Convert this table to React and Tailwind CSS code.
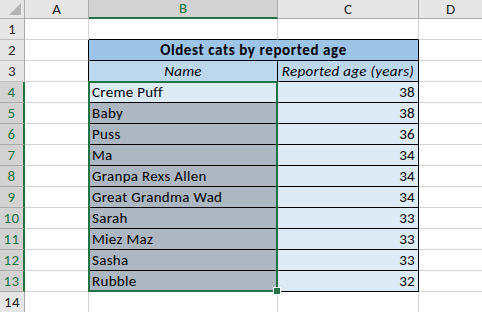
import React from "react";

const cats = [
  ["Creme Puff", 38],
  ["Baby", 38],
  ["Puss", 36],
  ["Ma", 34],
  ["Granpa Rexs Allen", 34],
  ["Great Grandma Wad", 34],
  ["Sarah", 33],
  ["Miez Maz", 33],
  ["Sasha", 33],
  ["Rubble", 32],
];

const font = { fontFamily: "Calibri, Carlito, Lato, 'Open Sans', sans-serif" };

function RowHead({ n, selected }) {
  return (
    <div
      className={
        "flex items-center justify-center border-b text-[15px] tracking-[0.3px] " +
        (selected
          ? "bg-[#d2d2d2] text-[#217346] border-b-[#ababab] border-r-2 border-r-[#217346]"
          : "bg-[#e6e6e6] text-[#262626] border-b-[#c0c0c0] border-r border-r-[#ababab]")
      }
    >
      {n}
    </div>
  );
}

export default function App() {
  return (
    <div className="relative w-[482px] h-[312px] overflow-hidden bg-white text-black" style={font}>
      <div className="grid grid-cols-[25px_64px_189px_141px_1fr] grid-rows-[19px_repeat(14,21px)]">
        {/* column headers */}
        <div className="relative bg-[#e6e6e6] border-r border-b border-[#ababab]">
          <svg className="absolute right-[3px] bottom-[3px]" width="12" height="12" viewBox="0 0 12 12">
            <polygon points="12,0 12,12 0,12" fill="#b4b4b4" />
          </svg>
        </div>
        <div className="flex items-center justify-center bg-[#e6e6e6] border-r border-b border-[#ababab] text-[15px] text-[#262626]">A</div>
        <div className="flex items-center justify-center bg-[#d2d2d2] border-r border-r-[#ababab] border-b-2 border-b-[#217346] text-[15px] text-[#217346]">B</div>
        <div className="flex items-center justify-center bg-[#e6e6e6] border-r border-b border-[#ababab] text-[15px] text-[#262626]">C</div>
        <div className="flex items-center justify-center bg-[#e6e6e6] border-b border-[#ababab] text-[15px] text-[#262626]">D</div>

        {/* row 1 */}
        <RowHead n={1} />
        <div className="border-r border-b border-[#d4d4d4]" />
        <div className="border-r border-r-[#d4d4d4] border-b border-b-black" />
        <div className="border-r border-r-[#d4d4d4] border-b border-b-black" />
        <div className="border-b border-[#d4d4d4]" />

        {/* row 2 */}
        <RowHead n={2} />
        <div className="border-r border-r-black border-b border-b-[#d4d4d4]" />
        <div className="col-span-2 flex items-center justify-center bg-[#9dc3e6] border-r border-b border-black text-[15px] tracking-[0.6px] font-bold">
          Oldest cats by reported age
        </div>
        <div className="border-b border-[#d4d4d4]" />

        {/* row 3 */}
        <RowHead n={3} />
        <div className="border-r border-r-black border-b border-b-[#d4d4d4]" />
        <div className="flex items-center justify-center bg-[#bdd7ee] border-r border-b border-black text-[15px] tracking-[0.3px] italic">Name</div>
        <div className="flex items-center justify-center bg-[#bdd7ee] border-r border-b border-black text-[15px] tracking-[0.3px] italic">Reported age (years)</div>
        <div className="border-b border-[#d4d4d4]" />

        {/* data rows */}
        {cats.map(([name, age], i) => (
          <React.Fragment key={name}>
            <RowHead n={i + 4} selected />
            <div className="border-r border-r-black border-b border-b-[#d4d4d4]" />
            <div
              className={
                "flex items-center pl-[3px] border-r border-b border-black text-[15px] tracking-[0.3px] " +
                (i === 0 ? "bg-[#ddebf7]" : "bg-[#adb7c1]")
              }
            >
              {name}
            </div>
            <div className="flex items-center justify-end pr-[3px] bg-[#ddebf7] border-r border-b border-black text-[15px] tracking-[0.3px]">
              {age}
            </div>
            <div className="border-b border-[#d4d4d4]" />
          </React.Fragment>
        ))}

        {/* row 14 */}
        <RowHead n={14} />
        <div className="border-r border-b border-[#d4d4d4]" />
        <div className="border-r border-b border-[#d4d4d4]" />
        <div className="border-r border-b border-[#d4d4d4]" />
        <div className="border-b border-[#d4d4d4]" />
      </div>

      {/* selection B4:B13 */}
      <div className="absolute left-[88px] top-[81px] w-[190px] h-[211px] border-2 border-[#217346] pointer-events-none" />
      <div className="absolute left-[274px] top-[288px] w-[6px] h-[6px] bg-[#217346] outline outline-1 outline-white" />
    </div>
  );
}
